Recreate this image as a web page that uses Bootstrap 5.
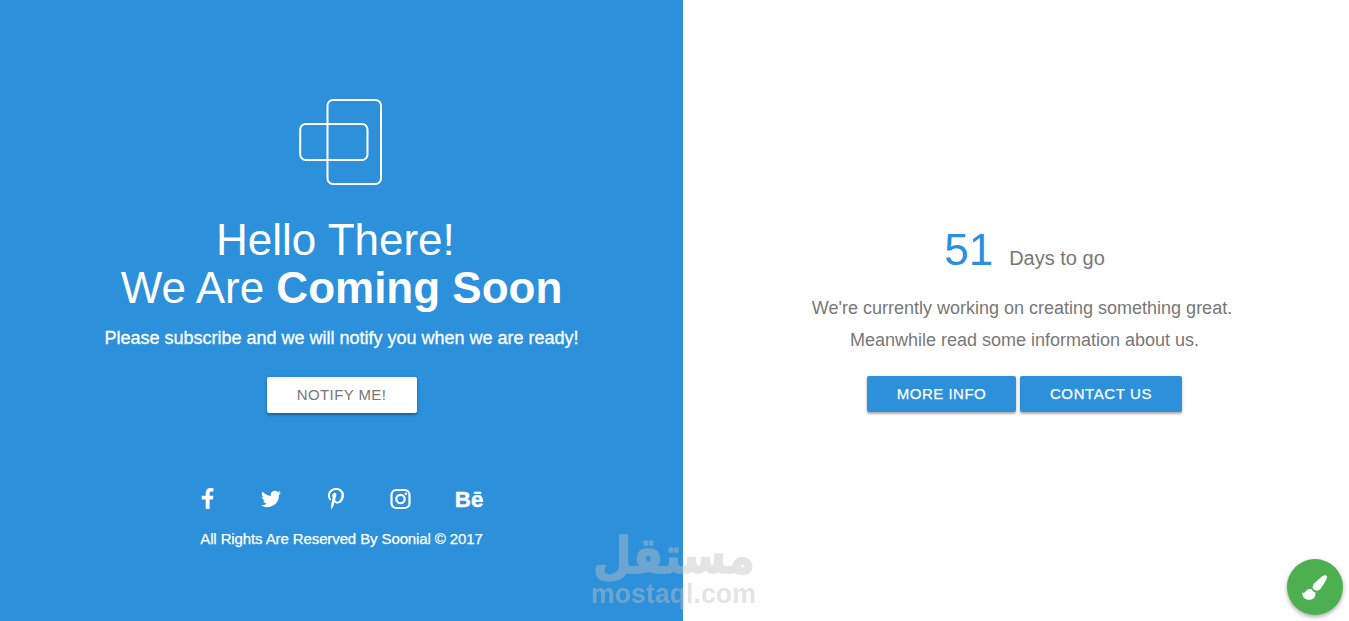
<!DOCTYPE html>
<html lang="en">
<head>
  <meta charset="UTF-8">
  <meta name="viewport" content="width=device-width, initial-scale=1">
  <title>Soonial - Coming Soon</title>
  <link rel="stylesheet" href="https://cdn.jsdelivr.net/npm/bootstrap@5.3.0/dist/css/bootstrap.min.css">
  <style>
    body {
      font-family: "Liberation Sans", Arial, sans-serif;
      color: #777;
      overflow: hidden;
    }

    .split {
      width: 1366px;
      height: 100vh;
    }

    .intro {
      background: #2c90db;
      color: #fff;
      padding-top: 98px;
    }

    .brand-logo {
      width: 84px;
      height: 88px;
      margin-right: 3px;
    }

    .headline {
      font-size: 44px;
      line-height: 48px;
      font-weight: 400;
      margin: 30px 0 0;
    }

    .sub-line {
      font-size: 18px;
      line-height: 32px;
      margin: 10px 0 0;
      -webkit-text-stroke: .3px #fff;
    }

    .btn-flat {
      width: 149px;
      height: 36px;
      padding: 0;
      border: 0;
      border-radius: 2px;
      font-size: 15px;
      line-height: 36px;
      letter-spacing: .5px;
      text-transform: uppercase;
      white-space: nowrap;
      background: #2c90db;
      color: #fff;
      -webkit-text-stroke: .25px;
      box-shadow: 0 2px 2px rgba(0, 0, 0, .25), 0 1px 4px rgba(0, 0, 0, .12);
    }

    .btn-notify {
      margin-top: 23px;
      width: 150px;
      background: #fff;
      color: #777;
      letter-spacing: .4px;
      -webkit-text-stroke: 0;
    }

    .btn-contact {
      width: 162px;
      letter-spacing: .6px;
    }

    .socials {
      margin-top: 73px;
      width: 284px;
      height: 26px;
    }

    .copyright {
      font-size: 15px;
      line-height: 24px;
      letter-spacing: -.11px;
      margin: 15px 0 0;
      -webkit-text-stroke: .25px #fff;
    }

    .details {
      padding-top: 220px;
    }

    .countdown {
      height: 60px;
      gap: 16px;
    }

    .day-count {
      font-size: 44px;
      line-height: 60px;
      color: #2c90db;
    }

    .day-label {
      font-size: 20px;
    }

    .about-line {
      font-size: 18px;
      line-height: 32px;
      margin: 12px 0 0;
    }

    .detail-actions {
      margin-top: 20px;
      gap: 4px;
    }

    .fab {
      right: 6px;
      bottom: 6px;
      width: 56px;
      height: 56px;
      border: 0;
      background: #4caf50;
      box-shadow: 0 2px 4px rgba(0, 0, 0, .35);
    }

    .watermark {
      left: 585px;
      top: 525px;
      opacity: .43;
    }
  </style>
</head>
<body>

<div class="split d-flex">
  <section class="intro w-50 d-flex flex-column align-items-center text-center">
    <svg class="brand-logo" viewBox="298 98 84 88" fill="none" stroke="#fff" stroke-width="2">
      <rect x="327.500" y="100" width="53.500" height="84" rx="5.500"/>
      <rect x="300.200" y="124" width="67.300" height="36" rx="5.500"/>
    </svg>
    <h1 class="headline">Hello There!&nbsp;<br>We Are <strong>Coming Soon</strong></h1>
    <p class="sub-line">Please subscribe and we will notify you when we are ready!</p>
    <button class="btn btn-flat btn-notify" type="button">Notify me!</button>

    <svg class="socials" viewBox="200 486 284 26" fill="#fff">
      <path d="M213.400 488.200v3.400h-2c-1.500 0-1.800.8-1.800 1.900v2.300h3.800l-.5 3.800h-3.300v9.400h-3.900v-9.400h-4v-3.800h4v-2.800c0-3.200 1.800-5 4.900-5 1.400 0 2.500.1 2.800.2z"/>
      <path transform="translate(261 490.700) scale(.835)" d="M24 2.400a9.800 9.800 0 0 1-2.800.8 4.900 4.900 0 0 0 2.100-2.700c-1 .6-2 1-3.100 1.200a4.900 4.900 0 0 0-8.400 4.500A14 14 0 0 1 1.700 1.100a4.900 4.900 0 0 0 1.500 6.500 4.900 4.900 0 0 1-2.200-.6c-.1 2.300 1.600 4.400 3.900 4.900a5 5 0 0 1-2.200.1 4.900 4.900 0 0 0 4.600 3.400A9.900 9.900 0 0 1 0 17.400a14 14 0 0 0 21.500-12.400c1-.7 1.800-1.600 2.500-2.600z"/>
      <path d="M328 495.200c0-4.500 4.100-7.200 8.300-7.200 4 0 7.700 2.700 7.700 7 0 4-2.100 8.500-6.600 8.500-1.100 0-2.400-.5-2.900-1.500-1 3.800-.9 4.400-3.100 7.300l-.2.100-.1-.2c-.1-.8-.2-1.600-.2-2.400 0-2.600 1.200-6.400 1.800-8.900-.3-.7-.4-1.400-.4-2.100 0-1.300.9-3 2.400-3 1.100 0 1.700.8 1.700 1.900 0 1.700-1.200 3.400-1.200 5.100 0 1.100 1 1.900 2.100 1.900 3.100 0 4.100-4.500 4.100-6.900 0-3.200-2.300-4.900-5.300-4.900-3.500 0-6.200 2.500-6.200 6 0 1.700 1 2.600 1 3 0 .3-.2 1.500-.7 1.500-.5 0-2.200-1.700-2.200-5.200z"/>
      <g fill="none" stroke="#fff" stroke-width="2.200">
        <rect x="391.500" y="490" width="18" height="18" rx="4.800"/>
        <circle cx="400.500" cy="499" r="4.200"/>
      </g>
      <circle cx="405.900" cy="493.700" r="1.300"/>
      <text x="454.800" y="507" font-size="22.500" font-weight="700" textLength="28.500" lengthAdjust="spacingAndGlyphs" stroke="#fff" stroke-width=".4">Bē</text>
    </svg>
    <p class="copyright">All Rights Are Reserved By Soonial © 2017</p>
  </section>

  <section class="details w-50 d-flex flex-column align-items-center text-center">
    <div class="countdown d-flex align-items-baseline">
      <span class="day-count">51</span>
      <span class="day-label">Days to go</span>
    </div>
    <p class="about-line">We're currently working on creating something great.&nbsp;<br>Meanwhile read some information about us.</p>
    <div class="detail-actions d-flex">
      <button class="btn btn-flat" type="button">More info</button>
      <button class="btn btn-flat btn-contact" type="button">Contact us</button>
    </div>
  </section>
</div>

<svg class="watermark position-fixed pe-none" width="180" height="90" viewBox="585 525 180 90" fill="#c1c1c1">
  <text x="593" y="573" font-family="DejaVu Sans, sans-serif" font-weight="700" font-size="50" textLength="162" lengthAdjust="spacingAndGlyphs" stroke="#c1c1c1" stroke-width="1.500" stroke-linejoin="round">مستقل</text>
  <text x="591" y="603" font-family="Liberation Sans, sans-serif" font-weight="700" font-size="27" textLength="165" lengthAdjust="spacingAndGlyphs">mostaql.com</text>
</svg>

<button class="fab btn rounded-circle position-fixed p-0 d-flex align-items-center justify-content-center" type="button" aria-label="Theme colors">
  <svg width="56" height="56" viewBox="1287 559 56 56" fill="#fff">
    <path d="M1326.200 575.500c1.300.8 1 2.300.4 3.500-1.600 3.200-3.600 6.500-5.900 9.600-1.500 2-3.600 2.600-5.700 1.600-2.300-1-3-3.200-1.900-5.200 1-1.900 7.600-7.700 9.700-9 1.200-.8 2.400-1.100 3.400-.5z"/>
    <path d="M1302.200 592.500c.8.500 1.600.7 2.400.1 1.500-1.900 3-3.600 5.300-3.600.8 0 1.500.1 2.200.4.400 1.600 1.600 2.600 3.300 3 .5 4.300-2.100 7.300-6.200 7.400-4.200.1-6.800-2.500-7-7.300z"/>
  </svg>
</button>

<script src="https://cdn.jsdelivr.net/npm/bootstrap@5.3.0/dist/js/bootstrap.bundle.min.js"></script>
</body>
</html>
